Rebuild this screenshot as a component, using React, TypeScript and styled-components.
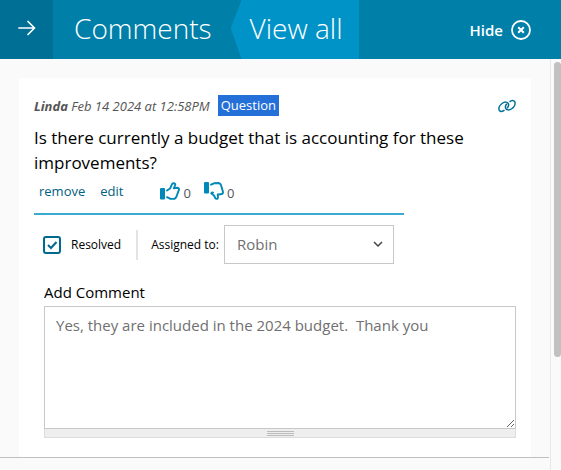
import React, { useState } from "react";
import styled, { createGlobalStyle } from "styled-components";

const GlobalStyle = createGlobalStyle`
  *, *::before, *::after { box-sizing: border-box; }
  body {
    margin: 0;
    background: #fafafa;
    color: #000;
    font-family: "Open Sans", "Noto Sans", sans-serif;
    font-size: 13px;
  }
  button, input, select, textarea { font: inherit; }
`;

const Page = styled.div`
  display: flex;
  flex-direction: column;
  min-height: 100vh;
`;

const Header = styled.header`
  display: flex;
  align-items: stretch;
  height: 59px;
  flex: none;
  background: #007fa9;
  color: #fff;
`;

const HeaderButton = styled.button`
  display: flex;
  align-items: center;
  border: 0;
  padding: 0;
  background: none;
  color: inherit;
  cursor: pointer;
`;

const BackButton = styled(HeaderButton)`
  width: 53px;
  justify-content: center;
  padding-bottom: 4px;
  background: #006f96;
`;

const Title = styled.h1`
  margin: 0;
  padding: 0 19px 0 21px;
  font-size: 28px;
  font-weight: 300;
  line-height: 56px;
  white-space: nowrap;
`;

const ViewAll = styled.a`
  padding: 0 17px 0 19px;
  background: #0093c7;
  clip-path: polygon(11px 0, 100% 0, 100% 100%, 11px 100%, 0 48%);
  color: #fff;
  font-size: 28px;
  font-weight: 300;
  line-height: 56px;
  text-decoration: none;
  white-space: nowrap;
`;

const HideButton = styled(HeaderButton)`
  gap: 8px;
  margin-left: auto;
  padding: 0 30px 0 0;
  font-size: 15px;
  font-weight: 600;
`;

const Body = styled.div`
  display: flex;
  flex: 1;
`;

const Content = styled.main`
  flex: 1;
  min-width: 0;
`;

const Track = styled.div`
  width: 11px;
  flex: none;
  padding: 3px 0 0 3px;
  border-left: 1px solid #e8e8e8;
`;

const Thumb = styled.div`
  height: 295px;
  border-radius: 4px;
  background: #c1c1c1;
`;

const Thread = styled.section`
  margin-right: 1px;
  padding: 19px 18px 0 19px;
  border-bottom: 1px solid #bfbfbf;
`;

const Card = styled.article`
  padding: 17px 15px 19px 15px;
  background: #fff;
`;

const Meta = styled.div`
  display: flex;
  align-items: center;
  gap: 8px;
  height: 21px;
  color: #555;
  font-style: italic;
`;

const Tag = styled.span`
  padding: 0 3px;
  background: #2470d8;
  color: #fff;
  font-style: normal;
  font-weight: 500;
  line-height: 21px;
`;

const Permalink = styled.a`
  display: flex;
  margin-left: auto;
  color: #006f96;
`;

const Message = styled.p`
  margin: 9px 0 0;
  font-size: 17px;
  line-height: 25px;
`;

const Actions = styled.div`
  display: flex;
  align-items: center;
  max-width: 370px;
  height: 40px;
  padding: 0 0 6px 5px;
  border-bottom: 2px solid #3aaad2;
`;

const TextButton = styled.button`
  margin-right: 15px;
  border: 0;
  padding: 0;
  background: none;
  color: #006080;
  cursor: pointer;
`;

const Votes = styled.div`
  display: flex;
  gap: 13px;
  margin-left: 22px;
`;

const VoteButton = styled.button`
  display: flex;
  align-items: center;
  gap: 3px;
  border: 0;
  padding: 0;
  background: none;
  color: #0088b8;
  cursor: pointer;
`;

const Count = styled.span`
  padding-top: 4px;
  color: #555;
  line-height: 18px;
`;

const Controls = styled.div`
  display: flex;
  align-items: center;
  margin: 10px 0 0 9px;
  font-size: 12px;
`;

const ResolvedLabel = styled.label`
  display: flex;
  align-items: center;
  gap: 10px;
  height: 30px;
  padding-right: 15px;
  border-right: 2px solid #e3e3e3;
`;

const TickBox = styled.span`
  display: grid;
  width: 18px;
  height: 18px;

  > * { grid-area: 1 / 1; }
`;

const Checkbox = styled.input`
  appearance: none;
  width: 18px;
  height: 18px;
  margin: 0;
  border: 2px solid #006a8e;
  border-radius: 3px;
  background: #fff;
`;

const Tick = styled.svg<{ $shown: boolean }>`
  width: 18px;
  height: 18px;
  pointer-events: none;
  visibility: ${({ $shown }) => ($shown ? "visible" : "hidden")};
`;

const AssignLabel = styled.label`
  margin: 0 5px 0 13px;
  white-space: nowrap;
`;

const SelectBox = styled.div`
  display: grid;
  align-items: center;
  width: 170px;

  > * { grid-area: 1 / 1; }
`;

const Select = styled.select`
  appearance: none;
  width: 100%;
  height: 39px;
  padding: 0 12px 2px;
  border: 1px solid #c8c8c8;
  border-radius: 0;
  background: #fff;
  color: #707070;
  font-size: 15px;
`;

const Chevron = styled.svg`
  justify-self: end;
  margin-right: 11px;
  pointer-events: none;
`;

const CommentField = styled.div`
  margin: 18px 0 0 10px;
`;

const CommentLabel = styled.label`
  display: block;
  margin-bottom: 3px;
  font-size: 15px;
  line-height: 21px;
`;

const CommentBox = styled.textarea`
  display: block;
  width: 100%;
  height: 123px;
  padding: 8px 11px;
  border: 1px solid #c8c8c8;
  border-radius: 0;
  background: #fff;
  color: #707070;
  font-size: 15px;
  line-height: 21px;
  resize: vertical;
`;

const Grippie = styled.div`
  display: flex;
  flex-direction: column;
  align-items: center;
  gap: 1px;
  height: 9px;
  padding-top: 2px;
  border: 1px solid #ddd;
  border-top: 0;
  background: #eee;
`;

const GripLine = styled.span`
  width: 27px;
  height: 1px;
  background: #bbb;
`;

const ArrowIcon = () => (
  <svg width="18" height="16" viewBox="0 0 18 16" fill="none" stroke="currentColor" strokeWidth="1.700" strokeLinecap="round" strokeLinejoin="round" aria-hidden="true">
    <path d="M1 8h15.500M10 1.500 16.500 8 10 14.500" />
  </svg>
);

const CloseIcon = () => (
  <svg width="20" height="20" viewBox="0 0 20 20" fill="none" stroke="currentColor" strokeWidth="1.800" aria-hidden="true">
    <circle cx="10" cy="10" r="9" />
    <path d="m7.200 7.200 5.600 5.600m0-5.600-5.600 5.600" strokeWidth="2" />
  </svg>
);

const LinkIcon = () => (
  <svg width="18" height="14" viewBox="0 0 18 14" fill="none" stroke="currentColor" strokeWidth="1.500" aria-hidden="true">
    <path d="M6.500 11.200C4.500 12.800 2.300 12.900 1.300 11.300C.300 9.300 1.500 6.300 4 4.500C6.500 2.600 9.400 2.700 10.300 4.600C11 6.200 10.300 7.900 9.200 9.200" />
    <path d="M11.500 2.800C13.500 1.200 15.700 1.100 16.700 2.700C17.700 4.700 16.500 7.700 14 9.500C11.500 11.400 8.600 11.300 7.700 9.400C7 7.800 7.700 6.100 8.800 4.800" />
  </svg>
);

const ThumbUp = () => (
  <svg width="20" height="18" viewBox="0 0 20 18" fill="none" stroke="currentColor" strokeWidth="1.900" strokeLinecap="round" strokeLinejoin="round" aria-hidden="true">
    <rect x="0" y="6" width="5" height="11.500" rx="1" fill="currentColor" stroke="none" />
    <path d="M7 8.500 10 6.500C10.800 5.300 11.200 3.500 12 2.200C12.800 .900 14.500 1.100 15.200 2C15.700 3 14.200 5 13.800 6.300L17.500 5.800C19 5.900 19.300 7 18.800 8.200L16.500 14.500C15.900 16.400 14.500 17 13 16.900H10.500L7 15.200" />
  </svg>
);

const ThumbDown = () => (
  <svg width="20" height="18" viewBox="0 0 20 18" fill="none" stroke="currentColor" strokeWidth="1.900" strokeLinecap="round" strokeLinejoin="round" aria-hidden="true">
    <rect x="0" y="0" width="5" height="11.500" rx="1" fill="currentColor" stroke="none" />
    <path d="M7 2.700 10 1.300 14.500 1C16 1.100 16.500 1.700 17 3L19 10C19 11.500 18 12.300 16.500 12.300L13.700 12.500C13.700 13.500 14.400 15 13.800 16.200C13.200 17.200 12 17.100 11.300 16.200L10 13.500 7.200 11.300C7.800 10.600 8.500 10.500 9 10.600" />
  </svg>
);

export default function App() {
  const [resolved, setResolved] = useState(true);
  return (
    <>
      <GlobalStyle />
      <Page>
        <Header>
          <BackButton aria-label="Collapse panel"><ArrowIcon /></BackButton>
          <Title>Comments</Title>
          <ViewAll href="#all">View all</ViewAll>
          <HideButton>Hide<CloseIcon /></HideButton>
        </Header>
        <Body>
          <Content>
            <Thread>
              <Card>
                <Meta>
                  <span><strong>Linda</strong> Feb 14 2024 at 12:58PM</span>
                  <Tag>Question</Tag>
                  <Permalink href="#comment" aria-label="Link to comment"><LinkIcon /></Permalink>
                </Meta>
                <Message>Is there currently a budget that is accounting for these improvements?</Message>
                <Actions>
                  <TextButton>remove</TextButton>
                  <TextButton>edit</TextButton>
                  <Votes>
                    <VoteButton aria-label="Like"><ThumbUp /><Count>0</Count></VoteButton>
                    <VoteButton aria-label="Dislike"><ThumbDown /><Count>0</Count></VoteButton>
                  </Votes>
                </Actions>
                <Controls>
                  <ResolvedLabel>
                    <TickBox>
                      <Checkbox type="checkbox" checked={resolved} onChange={(e) => setResolved(e.target.checked)} />
                      <Tick $shown={resolved} viewBox="0 0 18 18" fill="none" stroke="#006a8e" strokeWidth="2" aria-hidden="true">
                        <path d="m5 9 3 3 5.500-6" />
                      </Tick>
                    </TickBox>
                    Resolved
                  </ResolvedLabel>
                  <AssignLabel htmlFor="assignee">Assigned to:</AssignLabel>
                  <SelectBox>
                    <Select id="assignee" defaultValue="Robin">
                      <option>Robin</option>
                      <option>Linda</option>
                    </Select>
                    <Chevron width="10" height="7" viewBox="0 0 10 7" fill="none" stroke="#444" strokeWidth="1.500" aria-hidden="true">
                      <path d="m1 1 4 4 4-4" />
                    </Chevron>
                  </SelectBox>
                </Controls>
                <CommentField>
                  <CommentLabel htmlFor="comment">Add Comment</CommentLabel>
                  <CommentBox id="comment" defaultValue="Yes, they are included in the 2024 budget.  Thank you" />
                  <Grippie><GripLine /><GripLine /><GripLine /></Grippie>
                </CommentField>
              </Card>
            </Thread>
          </Content>
          <Track><Thumb /></Track>
        </Body>
      </Page>
    </>
  );
}
